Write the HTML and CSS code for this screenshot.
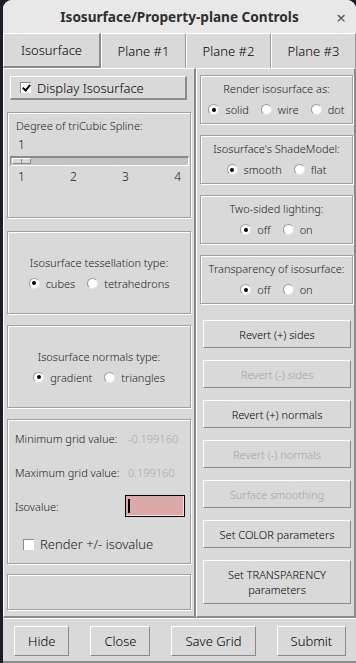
FILE: index.html
```html
<!DOCTYPE html>
<html lang="en">
<head>
    <meta charset="UTF-8">
    <meta name="viewport" content="width=device-width, initial-scale=1.0">
    <title>Isosurface/Property-plane Controls</title>
    <link rel="stylesheet" href="styles.css">
</head>
<body>
<div class="window">
    <div class="titlebar">
        <span class="title">Isosurface/Property-plane Controls</span>
        <span class="close">&#215;</span>
    </div>

    <div class="tabs">
        <div class="tab selected t1">Isosurface</div>
        <div class="tab t2">Plane #1</div>
        <div class="tab t2">Plane #2</div>
        <div class="tab t2">Plane #3</div>
    </div>

    <div class="main">
        <div class="col left">
            <div class="display-btn">
                <span class="check checked"></span>
                <span>Display Isosurface</span>
            </div>

            <div class="panel degree">
                <div class="plabel">Degree of triCubic Spline:</div>
                <div class="scale-value">1</div>
                <div class="trough"><div class="thumb"></div></div>
                <div class="ticks">
                    <span>1</span><span>2</span><span>3</span><span>4</span>
                </div>
            </div>

            <div class="panel centered tess">
                <div class="plabel">Isosurface tessellation type:</div>
                <div class="radios">
                    <span class="radio on"></span><span class="rtext">cubes</span>
                    <span class="radio"></span><span class="rtext">tetrahedrons</span>
                </div>
            </div>

            <div class="panel centered normals">
                <div class="plabel">Isosurface normals type:</div>
                <div class="radios">
                    <span class="radio on"></span><span class="rtext">gradient</span>
                    <span class="radio"></span><span class="rtext">triangles</span>
                </div>
            </div>

            <div class="panel grid">
                <div class="grow">
                    <span class="glabel">Minimum grid value:</span>
                    <span class="gvalue">-0.199160</span>
                </div>
                <div class="grow">
                    <span class="glabel">Maximum grid value:</span>
                    <span class="gvalue">0.199160</span>
                </div>
                <div class="grow iso">
                    <span class="glabel iso-label">Isovalue:</span>
                    <span class="entry"><span class="cursor"></span></span>
                </div>
                <div class="render-pm">
                    <span class="check"></span>
                    <span>Render +/- isovalue</span>
                </div>
            </div>

            <div class="panel empty"></div>
        </div>

        <div class="col right">
            <div class="panel rpanel">
                <div class="plabel">Render isosurface as:</div>
                <div class="radios">
                    <span class="radio on"></span><span class="rtext">solid</span>
                    <span class="radio"></span><span class="rtext">wire</span>
                    <span class="radio"></span><span class="rtext">dot</span>
                </div>
            </div>
            <div class="panel rpanel">
                <div class="plabel">Isosurface's ShadeModel:</div>
                <div class="radios">
                    <span class="radio on"></span><span class="rtext">smooth</span>
                    <span class="radio"></span><span class="rtext">flat</span>
                </div>
            </div>
            <div class="panel rpanel">
                <div class="plabel">Two-sided lighting:</div>
                <div class="radios">
                    <span class="radio on"></span><span class="rtext">off</span>
                    <span class="radio"></span><span class="rtext">on</span>
                </div>
            </div>
            <div class="panel rpanel">
                <div class="plabel">Transparency of isosurface:</div>
                <div class="radios">
                    <span class="radio on"></span><span class="rtext">off</span>
                    <span class="radio"></span><span class="rtext">on</span>
                </div>
            </div>

            <div class="buttons">
                <div class="btn">Revert (+) sides</div>
                <div class="btn disabled">Revert (-) sides</div>
                <div class="btn">Revert (+) normals</div>
                <div class="btn disabled">Revert (-) normals</div>
                <div class="btn disabled">Surface smoothing</div>
                <div class="btn">Set COLOR parameters</div>
                <div class="btn tall">Set TRANSPARENCY<br>parameters</div>
            </div>
        </div>
    </div>

    <div class="bottom">
        <div class="bbtn">Hide</div>
        <div class="bbtn">Close</div>
        <div class="bbtn">Save Grid</div>
        <div class="bbtn">Submit</div>
    </div>
</div>
</body>
</html>
```

FILE: styles.css
```css
body {
    margin: 0;
    background-color: #1c1d26;
    font-family: "Noto Sans", sans-serif;
    font-weight: 300;
    color: #000000;
    overflow: hidden;
}
.window {
    margin-left: 3px;
    width: 353px;
    height: 663px;
    background-color: #d9d9d9;
    border-radius: 9px 9px 0 0;
    overflow: hidden;
}
.titlebar {
    height: 33px;
    background-color: #e8e8e8;
    display: flex;
    align-items: center;
    justify-content: center;
    position: relative;
}
.title {
    font-weight: bold;
    font-size: 13.6px;
    color: #2e2e2e;
}
.close {
    position: absolute;
    right: 10px;
    top: 6px;
    font-size: 17px;
    font-weight: 400;
    color: #555555;
}

/* tabs */
.tabs {
    display: flex;
    height: 35px;
}
.tab {
    box-sizing: border-box;
    display: flex;
    align-items: center;
    justify-content: center;
    font-size: 13px;
    border-left: 1px solid #ffffff;
    border-top: 1px solid #ffffff;
    border-right: 1px solid #9a9a9a;
}
.t1 {
    width: 98px;
}
.t2 {
    width: 85px;
}
.tab.selected {
    border-right: 2px solid #8a8a8a;
    border-bottom: 2px solid #8a8a8a;
}

/* columns */
.main {
    display: flex;
    height: 550px;
}
.col {
    box-sizing: border-box;
    display: flex;
    flex-direction: column;
    border-top: 1px solid #ffffff;
    border-left: 1px solid #ffffff;
    border-right: 2px solid #8a8a8a;
    border-bottom: 2px solid #8a8a8a;
}
.left {
    width: 193px;
    padding: 7px 0 0 3px;
}
.right {
    width: 160px;
    padding: 6px 0 0 3px;
}
.panel {
    box-sizing: border-box;
    border: 1px solid #a0a0a0;
    box-shadow: inset 1px 1px 0 #ffffff, 1px 1px 0 #ffffff;
    font-size: 11px;
    color: #1a1a1a;
}
.left .panel {
    width: 184px;
}
.centered {
    display: flex;
    flex-direction: column;
    align-items: center;
    justify-content: center;
    gap: 6px;
}

/* checkbutton */
.display-btn {
    box-sizing: border-box;
    margin-left: 3px;
    width: 177px;
    height: 24px;
    display: flex;
    align-items: center;
    gap: 6px;
    padding-left: 9px;
    font-size: 13px;
    border-top: 1px solid #ffffff;
    border-left: 1px solid #ffffff;
    border-right: 2px solid #8a8a8a;
    border-bottom: 2px solid #8a8a8a;
}
.check {
    box-sizing: border-box;
    width: 11px;
    height: 11px;
    background-color: #ffffff;
    border-top: 1px solid #8a8a8a;
    border-left: 1px solid #8a8a8a;
    position: relative;
}
.check.checked::after {
    content: "";
    position: absolute;
    left: 3px;
    top: 0px;
    width: 3px;
    height: 6px;
    border-right: 2px solid #000000;
    border-bottom: 2px solid #000000;
    transform: rotate(40deg);
}

/* scale */
.degree {
    margin-top: 12px;
    height: 106px;
    padding: 5px 0 0 0;
}
.degree .plabel {
    padding-left: 8px;
}
.scale-value {
    padding-left: 10px;
    margin-top: 3px;
    font-size: 12px;
}
.trough {
    box-sizing: border-box;
    margin: 3px 1px 0 2px;
    height: 10px;
    background-color: #c3c3c3;
    border-top: 2px solid #8a8a8a;
    border-left: 1px solid #8a8a8a;
    border-bottom: 1px solid #ffffff;
    border-right: 1px solid #ffffff;
    position: relative;
}
.thumb {
    position: absolute;
    left: 1px;
    top: 0;
    width: 19px;
    height: 6px;
    box-sizing: border-box;
    background-color: #d9d9d9;
    border-top: 1px solid #ffffff;
    border-left: 1px solid #ffffff;
    border-bottom: 1px solid #8a8a8a;
    border-right: 1px solid #8a8a8a;
}
.thumb::after {
    content: "";
    position: absolute;
    left: 8px;
    top: 0;
    width: 1px;
    height: 4px;
    background-color: #8a8a8a;
}
.ticks {
    display: flex;
    justify-content: space-between;
    padding: 2px 9px 0 10px;
    font-size: 12px;
}

.tess {
    margin-top: 13px;
    height: 83px;
}
.normals {
    margin-top: 11px;
    height: 83px;
}

/* radios */
.radios {
    display: flex;
    align-items: center;
}
.radio {
    box-sizing: border-box;
    width: 11px;
    height: 11px;
    border-radius: 50%;
    background-color: #ffffff;
    border-top: 1px solid #9a9a9a;
    border-left: 1px solid #9a9a9a;
    border-right: 1px solid #e6e6e6;
    border-bottom: 1px solid #e6e6e6;
    margin-left: 12px;
    display: flex;
    align-items: center;
    justify-content: center;
}
.radio:first-child {
    margin-left: 0;
}
.radio.on::after {
    content: "";
    width: 4px;
    height: 4px;
    border-radius: 50%;
    background-color: #000000;
}
.rtext {
    margin-left: 6px;
    font-size: 11px;
}

/* grid values */
.grid {
    margin-top: 11px;
    height: 145px;
    padding: 10px 0 0 7px;
}
.grow {
    display: flex;
    align-items: center;
    height: 16px;
    margin-bottom: 18px;
    white-space: nowrap;
}
.glabel {
    width: 113px;
}
.gvalue {
    color: #a8a8a8;
}
.iso {
    height: 22px;
    margin-top: -3px;
    margin-bottom: 0;
}
.iso-label {
    width: 110px;
}
.entry {
    box-sizing: border-box;
    width: 60px;
    height: 22px;
    background-color: #dca9a9;
    border: 1px solid #000000;
    box-shadow: inset -1px -1px 0 #f4e0e0;
    padding: 3px 0 0 2px;
}
.cursor {
    display: block;
    width: 2px;
    height: 14px;
    background-color: #000000;
}
.render-pm {
    display: flex;
    align-items: center;
    gap: 6px;
    margin: 18px 0 0 8px;
    font-size: 13px;
}

.empty {
    margin-top: 10px;
    height: 36px;
}

/* right column */
.rpanel {
    width: 153px;
    height: 49px;
    margin-bottom: 11px;
    display: flex;
    flex-direction: column;
    align-items: center;
    padding-top: 5px;
    gap: 6px;
}
.buttons {
    display: flex;
    flex-direction: column;
    gap: 12px;
    margin-top: 5px;
    padding-left: 3px;
}
.btn {
    box-sizing: border-box;
    width: 148px;
    height: 28px;
    display: flex;
    align-items: center;
    justify-content: center;
    text-align: center;
    font-size: 11px;
    line-height: 15px;
    border-top: 1px solid #ffffff;
    border-left: 1px solid #ffffff;
    border-right: 1px solid #8a8a8a;
    border-bottom: 1px solid #8a8a8a;
}
.btn.disabled {
    color: #a3a3a3;
}
.btn.tall {
    height: 44px;
}

/* bottom bar */
.bottom {
    box-sizing: border-box;
    height: 45px;
    border-top: 1px solid #ffffff;
    border-bottom: 2px solid #8a8a8a;
    display: flex;
    align-items: center;
    padding: 1px 0 0 11px;
    gap: 21px;
}
.bbtn {
    box-sizing: border-box;
    height: 30px;
    padding: 0 13px;
    display: flex;
    align-items: center;
    font-size: 13px;
    border-top: 1px solid #ffffff;
    border-left: 1px solid #ffffff;
    border-right: 1px solid #8a8a8a;
    border-bottom: 1px solid #8a8a8a;
}
```
